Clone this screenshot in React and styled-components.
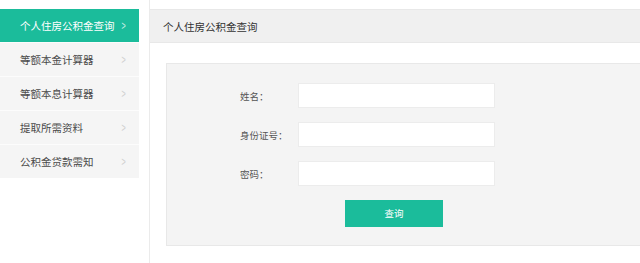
import React from 'react'
import styled, { createGlobalStyle } from 'styled-components'

const GlobalStyle = createGlobalStyle`
  html, body {
    margin: 0;
    padding: 0;
    background: #fff;
    font-family: "Microsoft YaHei", "Noto Sans CJK SC", sans-serif;
  }
`

const menu = ['个人住房公积金查询', '等额本金计算器', '等额本息计算器', '提取所需资料', '公积金贷款需知']

const fields = ['姓名：', '身份证号：', '密码：']

const App = () => (
  <Page>
    <GlobalStyle />
    <Sidebar>
      {menu.map((item, i) => (
        <MenuItem key={item} active={i === 0}>
          <span>{item}</span>
          <Chevron active={i === 0}>&gt;</Chevron>
        </MenuItem>
      ))}
    </Sidebar>
    <Main>
      <Header>个人住房公积金查询</Header>
      <Panel>
        {fields.map(label => (
          <Row key={label}>
            <Label>{label}</Label>
            <Input type={label === '密码：' ? 'password' : 'text'} />
          </Row>
        ))}
        <ButtonRow>
          <Button>查询</Button>
        </ButtonRow>
      </Panel>
    </Main>
  </Page>
)

const Page = styled.div`
  display: flex;
  align-items: flex-start;
  width: 640px;
  height: 263px;
  overflow: hidden;
`

const Sidebar = styled.div`
  width: 139px;
  margin-top: 9px;
  background-color: #f5f5f5;
  flex-shrink: 0;
`

const MenuItem = styled.div`
  display: flex;
  align-items: center;
  justify-content: space-between;
  padding: 0 12px 0 20px;
  box-sizing: border-box;
  border-top: ${p => (p.active ? 'none' : '1px solid #fcfcfc')};
  height: ${p => (p.active ? '33px' : '34px')};
  background-color: ${p => (p.active ? '#1bbc9b' : '#f5f5f5')};
  color: ${p => (p.active ? '#fff' : '#4a4a4a')};
  font-size: 10.5px;
  white-space: nowrap;
`

const Chevron = styled.span`
  font-family: "Liberation Sans", sans-serif;
  font-size: 12px;
  display: inline-block;
  transform: scaleX(0.6);
  color: ${p => (p.active ? '#c9efe6' : '#cfcfcf')};
`

const Main = styled.div`
  flex: 1;
  margin-left: 10px;
  height: 263px;
  border-left: 1px solid #ebebeb;
  padding-top: 9px;
  box-sizing: border-box;
`

const Header = styled.div`
  height: 34px;
  box-sizing: border-box;
  border-top: 1px solid #e8e8e8;
  border-bottom: 1px solid #e8e8e8;
  background-color: #f0f0f0;
  padding-left: 13px;
  display: flex;
  align-items: center;
  font-size: 10.5px;
  color: #333;
  white-space: nowrap;
`

const Panel = styled.div`
  margin: 20px -20px 0 16px;
  height: 183px;
  box-sizing: border-box;
  border: 1px solid #e8e8e8;
  background-color: #f4f4f4;
  padding: 19px 0 0 73px;
  display: flex;
  flex-direction: column;
  gap: 14px;
`

const Row = styled.div`
  display: flex;
  align-items: center;
`

const Label = styled.div`
  width: 58px;
  font-size: 9.5px;
  color: #555;
  white-space: nowrap;
`

const Input = styled.input`
  width: 197px;
  height: 25px;
  box-sizing: border-box;
  border: 1px solid #ececec;
  background: #fff;
  outline: none;
  margin: 0;
  padding: 0 6px;
`

const ButtonRow = styled.div`
  padding-left: 105px;
  margin-top: -2px;
`

const Button = styled.button`
  width: 98px;
  height: 27px;
  border: none;
  background-color: #1bbc9b;
  color: #fff;
  font-family: inherit;
  font-size: 9.5px;
  padding: 0;
  cursor: pointer;
`

export default App
